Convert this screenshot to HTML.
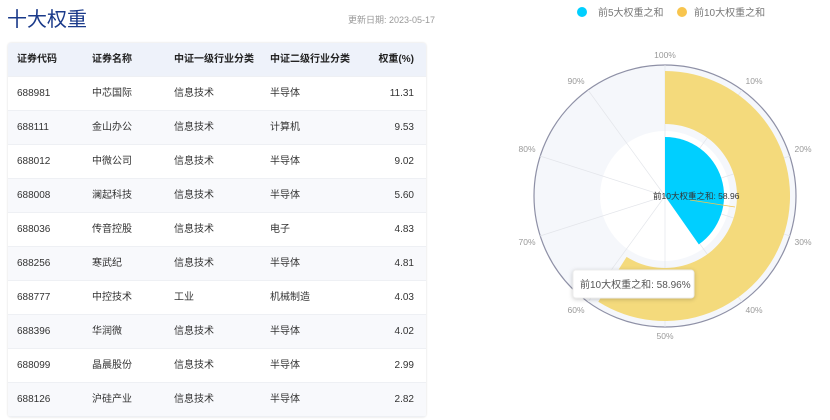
<!DOCTYPE html>
<html><head><meta charset="utf-8"><style>
body{margin:0;width:830px;height:420px;background:#fff;font-family:"Liberation Sans","Noto Sans CJK SC",sans-serif;position:relative;overflow:hidden}
.title{position:absolute;left:7px;top:3px;font-size:20px;color:#1a3a8a}
.date{position:absolute;left:348px;top:13px;font-size:9px;color:#999}
.tbl{position:absolute;left:8px;top:43px;width:418px;font-size:10px;color:#333;box-shadow:0 0 2px rgba(0,0,0,.15);border-radius:3px;overflow:hidden}
.row{height:34px;display:flex;align-items:center;border-bottom:1px solid #eef0f4;box-sizing:border-box;line-height:12px}
.row.h{background:#eef2fa;font-weight:bold;color:#222}
.row:nth-child(odd):not(.h){background:#f8f9fc}
.row span{display:block}
.a{width:75px;padding-left:9px}.b{width:82px}.c{width:96px}.d{width:90px}.e{flex:1;text-align:right;padding-right:12px}
</style></head><body>
<div class="title">十大权重</div>
<div class="date">更新日期: 2023-05-17</div>
<div class="tbl">
<div class="row h"><span class="a">证券代码</span><span class="b">证券名称</span><span class="c">中证一级行业分类</span><span class="d">中证二级行业分类</span><span class="e">权重(%)</span></div>
<div class="row"><span class="a">688981</span><span class="b">中芯国际</span><span class="c">信息技术</span><span class="d">半导体</span><span class="e">11.31</span></div>
<div class="row"><span class="a">688111</span><span class="b">金山办公</span><span class="c">信息技术</span><span class="d">计算机</span><span class="e">9.53</span></div>
<div class="row"><span class="a">688012</span><span class="b">中微公司</span><span class="c">信息技术</span><span class="d">半导体</span><span class="e">9.02</span></div>
<div class="row"><span class="a">688008</span><span class="b">澜起科技</span><span class="c">信息技术</span><span class="d">半导体</span><span class="e">5.60</span></div>
<div class="row"><span class="a">688036</span><span class="b">传音控股</span><span class="c">信息技术</span><span class="d">电子</span><span class="e">4.83</span></div>
<div class="row"><span class="a">688256</span><span class="b">寒武纪</span><span class="c">信息技术</span><span class="d">半导体</span><span class="e">4.81</span></div>
<div class="row"><span class="a">688777</span><span class="b">中控技术</span><span class="c">工业</span><span class="d">机械制造</span><span class="e">4.03</span></div>
<div class="row"><span class="a">688396</span><span class="b">华润微</span><span class="c">信息技术</span><span class="d">半导体</span><span class="e">4.02</span></div>
<div class="row"><span class="a">688099</span><span class="b">晶晨股份</span><span class="c">信息技术</span><span class="d">半导体</span><span class="e">2.99</span></div>
<div class="row"><span class="a">688126</span><span class="b">沪硅产业</span><span class="c">信息技术</span><span class="d">半导体</span><span class="e">2.82</span></div>
</div>
<svg width="830" height="420" style="position:absolute;left:0;top:0" font-family="Liberation Sans,Noto Sans CJK SC,sans-serif">
<circle cx="582" cy="12" r="5" fill="#00cfff"/><text x="598" y="16" font-size="10" fill="#777">前5大权重之和</text>
<circle cx="682" cy="12" r="5" fill="#f8c54e"/><text x="694" y="16" font-size="10" fill="#777">前10大权重之和</text>
<circle cx="665" cy="196" r="131" fill="#f5f7fb" stroke="#8e90a6" stroke-width="1.2"/>
<circle cx="665" cy="196" r="65" fill="#fff"/>
<g stroke="#e3e5ea" stroke-width="0.7">
<line x1="665" y1="196" x2="665" y2="65"/><line x1="665" y1="196" x2="742" y2="90"/><line x1="665" y1="196" x2="790" y2="156"/><line x1="665" y1="196" x2="790" y2="236"/><line x1="665" y1="196" x2="742" y2="302"/><line x1="665" y1="196" x2="665" y2="327"/><line x1="665" y1="196" x2="588" y2="302"/><line x1="665" y1="196" x2="540" y2="236"/><line x1="665" y1="196" x2="540" y2="156"/><line x1="665" y1="196" x2="588" y2="90"/>
</g>
<path d="M665 71 A125 125 0 1 1 598.3 301.7 L626.6 256.9 A72 72 0 1 0 665 124 Z" fill="#f4da7c"/>
<path d="M665 196 L665 137 A59 59 0 0 1 698.8 244.4 Z" fill="#00cfff"/>
<g font-size="8.5" fill="#999" text-anchor="middle">
<text x="665" y="58">100%</text><text x="754" y="84">10%</text><text x="803" y="152">20%</text><text x="803" y="245">30%</text><text x="754" y="313">40%</text><text x="665" y="339">50%</text><text x="576" y="313">60%</text><text x="527" y="245">70%</text><text x="527" y="152">80%</text><text x="576" y="84">90%</text>
</g>
<line x1="690" y1="200" x2="735" y2="207" stroke="#f4c54e" stroke-width="0.8"/>
<text x="653" y="199" font-size="8.5" fill="#333">前10大权重之和: 58.96</text>
<rect x="573" y="270" width="121" height="28" rx="3" fill="#fff" stroke="#eee" style="filter:drop-shadow(0 1px 2px rgba(0,0,0,.2))"/>
<text x="580" y="288" font-size="10" fill="#555">前10大权重之和: 58.96%</text>
</svg>
</body></html>
